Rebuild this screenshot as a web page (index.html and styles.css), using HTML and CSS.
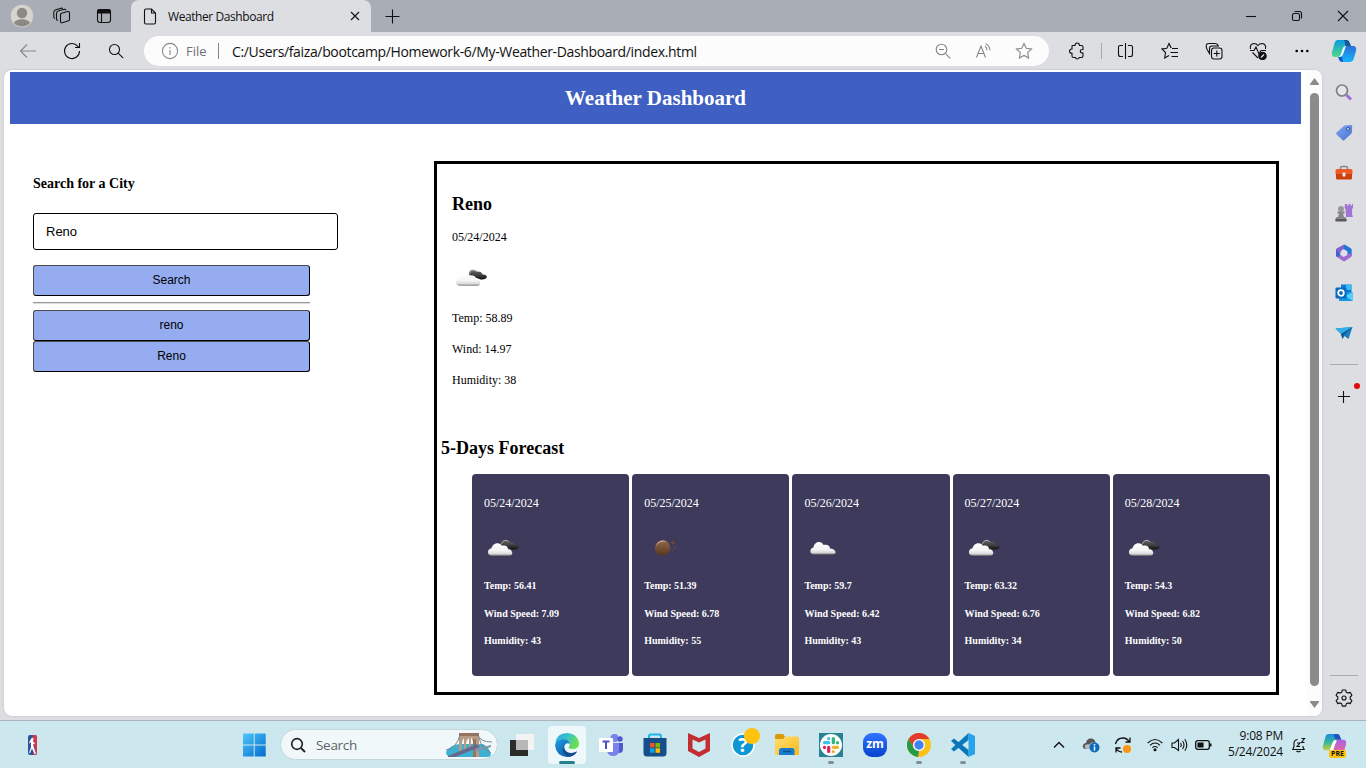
FILE: index.html
```html
<!DOCTYPE html>
<html lang="en">
<head>
<meta charset="utf-8">
<title>Weather Dashboard</title>
<link rel="stylesheet" href="styles.css">
</head>
<body>
<svg class="defs" width="0" height="0">
  <defs>
    <linearGradient id="cloud" x1="0" y1="0" x2="0" y2="1"><stop offset="0" stop-color="#fff"/><stop offset=".6" stop-color="#f4f4f4"/><stop offset=".85" stop-color="#d8d8d8"/><stop offset="1" stop-color="#777"/></linearGradient>
    <linearGradient id="dark" x1="0" y1="0" x2="0" y2="1"><stop offset="0" stop-color="#666"/><stop offset=".5" stop-color="#444"/><stop offset="1" stop-color="#111"/></linearGradient>
    <linearGradient id="moon" x1="0" y1="0" x2="0" y2="1"><stop offset="0" stop-color="#94694a"/><stop offset="1" stop-color="#55361f"/></linearGradient>
    <linearGradient id="win" x1="0" y1="0" x2="1" y2="1"><stop offset="0" stop-color="#4cc8fb"/><stop offset="1" stop-color="#0669cf"/></linearGradient>
    <linearGradient id="copA" x1="0" y1="0" x2="0" y2="1"><stop offset="0" stop-color="#0a9be0"/><stop offset="1" stop-color="#52d985"/></linearGradient>
    <linearGradient id="copB" x1="0" y1="0" x2="0" y2="1"><stop offset="0" stop-color="#2b6fd8"/><stop offset="1" stop-color="#12b7fb"/></linearGradient>
    <linearGradient id="edgeG" x1="0" y1="0" x2="1" y2=".4"><stop offset="0" stop-color="#2aa9dd"/><stop offset=".5" stop-color="#35c1cf"/><stop offset="1" stop-color="#6be04f"/></linearGradient>
    <linearGradient id="edgeB" x1="0" y1="0" x2="1" y2="1"><stop offset="0" stop-color="#1d9ee3"/><stop offset="1" stop-color="#0d4a9c"/></linearGradient>
    <linearGradient id="tag" x1="0" y1="0" x2="1" y2="1"><stop offset="0" stop-color="#7aa6f0"/><stop offset="1" stop-color="#4d73cf"/></linearGradient>
    <linearGradient id="folder" x1="0" y1="0" x2="1" y2="1"><stop offset="0" stop-color="#ffdf73"/><stop offset="1" stop-color="#fbb919"/></linearGradient>
    <linearGradient id="preA" x1="0" y1="0" x2="0" y2="1"><stop offset="0" stop-color="#188bdf"/><stop offset=".5" stop-color="#35b59a"/><stop offset="1" stop-color="#c6cf3e"/></linearGradient>
    <linearGradient id="preB" x1="0" y1="0" x2="0" y2="1"><stop offset="0" stop-color="#a863e6"/><stop offset="1" stop-color="#f56a84"/></linearGradient>
    <linearGradient id="zoomer" x1="0" y1="0" x2="0" y2="1"><stop offset="0" stop-color="#2f74ff"/><stop offset="1" stop-color="#0842cf"/></linearGradient>
    <symbol id="broken-clouds" viewBox="0 0 38 38">
      <path d="M17 15c-1-5 5-7 8-3.500 3-.3 5 1 5.500 3 3.500 0 5 1.500 4 3.500-1 1.500-4 1.500-6 1.500z" fill="url(#dark)"/>
      <path d="M17.500 14c1-4 5.500-4.500 7.500-2" stroke="#aaa" fill="none"/>
      <path d="M8 25.800c-5 0-5.500-6.500-.5-7.500 1-5.500 8.500-7 10.500-2.500 4-1 6 1 6 3.500 5 0 6 6.500 1 6.500z" fill="url(#cloud)"/>
    </symbol>
    <symbol id="cloudy" viewBox="0 0 38 38"><path d="M10 24.500c-4.500 0-5-6-.5-7 .5-6 8-7.500 10-2.500 4-1 6.500 1 6.500 3.500 6 0 7.500 6 3 6z" fill="url(#cloud)"/></symbol>
    <symbol id="mist-night" viewBox="0 0 38 38"><circle cx="18.700" cy="18" r="7.700" fill="url(#moon)"/><path d="M11.800 16.500a7.300 7.300 0 0 1 11-4.800c-5-.5-9 .5-11 4.800z" fill="#d9bda8"/><path d="M27 12.500h3.600M28.800 10.700v3.600M29.500 17.500h2M27.500 20.500h1.500" stroke="#75492f" stroke-width="1.600"/></symbol>
  </defs>
</svg>

<header class="tabstrip">
  <div class="cell avatar-cell"><svg width="24" height="24" viewBox="0 0 24 24"><circle cx="12" cy="12" r="11.200" fill="#d6d4cf"/><circle cx="12" cy="9" r="5.200" fill="#8c8883"/><path d="M4 19c2-5 14-5 16 0a11 11 0 0 1-16 0z" fill="#8c8883"/></svg></div>
  <div class="cell spaces-cell"><svg class="ln" width="18" height="18" viewBox="0 0 18 18"><path d="M8.500 6.200l6-1.700q2-.3 2 1.500v6.500q0 1-1 1.300l-6 1.900q-2 .4-2-1.300V7.500q0-1 1-1.300zM5 13.500q-1.500-.2-1.500-1.500V6.500q0-2 2-2.700l6-1.500q1.200 0 1.500.8M2 11.500q-1.200-.3-1.200-1.500V5.500q0-2 2-2.700L8 1.200q1.300-.2 1.600.5"/></svg></div>
  <div class="cell layout-cell"><svg class="ln" width="16" height="16" viewBox="0 0 16 16"><rect x="1.500" y="1.500" width="13" height="13" rx="2.500"/><path d="M2 2h12v3H2z" fill="#111"/><path d="M5.500 5v9"/></svg></div>
  <div class="tab">
    <svg class="ln" width="14" height="17" viewBox="0 0 14 17"><path d="M3 1h5.500L12.500 5v9.500q0 1.500-1.500 1.500H3q-1.500 0-1.500-1.500v-12Q1.500 1 3 1zM8.500 1v4h4"/></svg>
    <span class="tab-title">Weather Dashboard</span>
    <svg class="ln tab-close" width="10" height="10" viewBox="0 0 10 10"><path d="M1 1l8 8M9 1L1 9"/></svg>
  </div>
  <div class="cell new-tab"><svg class="ln" width="15" height="15" viewBox="0 0 15 15"><path d="M7.500 .5v14M.5 7.500h14"/></svg></div>
  <div class="window-buttons">
    <svg class="ln" width="46" height="32" viewBox="0 0 46 32"><path d="M18 16.500h10"/></svg>
    <svg class="ln" width="46" height="32" viewBox="0 0 46 32"><rect x="18.500" y="13.500" width="7" height="7" rx="1.500"/><path d="M20.500 11.500h5q2 0 2 2v5"/></svg>
    <svg class="ln" width="46" height="32" viewBox="0 0 46 32"><path d="M18 11l10 10M28 11L18 21"/></svg>
  </div>
</header>

<nav class="toolbar">
  <div class="cell"><svg class="ln grey" width="18" height="16" viewBox="0 0 18 16"><path d="M17 8H1.500M8 1.500L1.500 8 8 14.500"/></svg></div>
  <div class="cell"><svg class="ln" width="18" height="18" viewBox="0 0 18 18"><path d="M16.500 9A7.500 7.500 0 1 1 14.800 4.300L16 5.500M16.500 1v4.500H12"/></svg></div>
  <div class="cell"><svg class="ln" width="16" height="16" viewBox="0 0 16 16"><circle cx="6.500" cy="6.500" r="5"/><path d="M10.200 10.200l5 5"/></svg></div>
  <div class="address">
    <svg class="ln grey" width="18" height="18" viewBox="0 0 18 18"><circle cx="9" cy="9" r="7.600"/><path d="M9 8v5M9 5v1.500"/></svg>
    <span class="scheme">File</span>
    <span class="address-sep"></span>
    <span class="url">C:/Users/faiza/bootcamp/Homework-6/My-Weather-Dashboard/index.html</span>
    <div class="address-actions">
      <svg class="ln grey" width="16" height="16" viewBox="0 0 16 16"><circle cx="6.500" cy="6.500" r="5.300"/><path d="M4 6.500h5M10.300 10.300l5 5"/></svg>
      <svg class="ln grey" width="18" height="16" viewBox="0 0 18 16"><path d="M2.500 14.500L7 3l4.500 11.500M4 10.500h6M11 3.200q2 1.500 2 4M11.500 .8q4 1.800 4.500 6.400"/></svg>
      <svg class="ln grey" width="18" height="18" viewBox="0 0 18 18"><path d="M9 1.500l2.300 4.800 5.200.7-3.800 3.700.9 5.300L9 13.500 4.400 16l.9-5.300L1.500 7l5.200-.7z"/></svg>
    </div>
  </div>
  <div class="cell"><svg class="ln" width="18" height="18" viewBox="0 0 18 18"><path d="M4.500 3.500H7Q7 1 9.200 1t2.200 2.500h2.100q1.500 0 1.500 1.500v2.500q-2.700 0-2.700 1.700T15 11v2.500q0 2-1.500 2h-2.300Q11 17 9.300 17T7.500 15.500h-2Q4 15.500 4 14v-2.800Q1.500 11.200 1.500 9.200T4 7V4z"/></svg></div>
  <span class="tool-sep"></span>
  <div class="cell"><svg class="ln" width="18" height="18" viewBox="0 0 18 18"><path d="M6 3.500H3Q1.500 3.500 1.500 5v7.500q0 2 2 2H6M11 3.500h3q1.500 0 1.500 1.500v7.500q0 2-2 2H11M8.500 1v16"/></svg></div>
  <div class="cell"><svg class="ln" width="18" height="18" viewBox="0 0 18 18"><path d="M10 5.800L8 1.500 5.800 6.300 1 7l3.500 3.500L3.700 16 8 13.500M8 1.500L10.300 6M11 6.500h6M9.500 10.500H17M10.500 14.500H17"/></svg></div>
  <div class="cell"><svg class="ln" width="18" height="18" viewBox="0 0 18 18"><rect x="6.500" y="6" width="10.500" height="11" rx="2.500"/><path d="M11.800 8.500v6M8.800 11.500h6M5 12.500L2 7.200Q1 5 1.200 3.500q.3-2 2.300-2h7q2 0 2.800 2.500M4.500 11V6.500q0-2.500 2.500-2.500h7"/></svg></div>
  <div class="cell"><svg class="ln" width="18" height="18" viewBox="0 0 18 18"><path d="M9 16L3.500 10.500M1.500 7Q.5 2 5 1.500q2.500 0 4 2 1.500-2 4-2 4.500.5 3.500 5.500M1 8.500h4l2-3.500 3 7 2-3.500h5"/><circle cx="13.500" cy="14" r="3.700" fill="#111"/><path d="M12 15.500l3-3" stroke="#eee"/></svg></div>
  <div class="cell"><svg width="16" height="16" viewBox="0 0 16 16"><circle cx="2.700" cy="8" r="1.300"/><circle cx="8" cy="8" r="1.300"/><circle cx="13.300" cy="8" r="1.300"/></svg></div>
  <div class="cell copilot"><svg width="26" height="24" viewBox="0 0 26 24"><path d="M6.500 1h9q2.500 0 3 2.500L20 7h-5l-4 9q-1 2-3.500 2H4q-4 0-3-5L3.500 4Q4.300 1 6.500 1z" fill="url(#copA)"/><path d="M13 1h2.500Q18 1 18.600 3.500L20 7h-5q-1.500-.5-1-3z" fill="#165a9c"/><path d="M19.500 23h-8q-2.500 0-3.200-2.500L7.500 18q2.500-.5 3.500-3l3-8h8q4 0 3 5l-2.300 8q-1 3-3.200 3z" fill="url(#copB)"/><path d="M8 18q3.500 0 4.500-4L15 7q-2.500 0-3.500 3l-1.500 5q-.7 2.500-3 3z" fill="#e9fbff"/><path d="M7 18h4l1 5q-3.500 0-4-3z" fill="#1653ce"/></svg></div>
</nav>

<div class="workspace">
  <div class="viewport">
    <div class="page">
      <h1 class="page-title">Weather Dashboard</h1>
      <div class="columns">
        <section class="search-panel">
          <h3 class="search-heading">Search for a City</h3>
          <input class="city-input" type="text" value="Reno">
          <button class="btn">Search</button>
          <hr class="rule">
          <button class="btn">reno</button>
          <button class="btn">Reno</button>
        </section>
        <main class="results">
          <section class="today">
            <h2 class="heading">Reno</h2>
            <p class="today-date">05/24/2024</p>
            <svg class="today-icon" width="38" height="38"><use href="#broken-clouds"/></svg>
            <p class="stat">Temp: 58.89</p>
            <p class="stat">Wind: 14.97</p>
            <p class="stat">Humidity: 38</p>
          </section>
          <h2 class="heading forecast-heading">5-Days Forecast</h2>
          <section class="forecast">
            <article class="card"><p class="card-date">05/24/2024</p><svg class="card-icon" width="38" height="38"><use href="#broken-clouds"/></svg><h5 class="temp">Temp: 56.41</h5><h5 class="wind">Wind Speed: 7.09</h5><h5 class="hum">Humidity: 43</h5></article>
            <article class="card"><p class="card-date">05/25/2024</p><svg class="card-icon" width="38" height="38"><use href="#mist-night"/></svg><h5 class="temp">Temp: 51.39</h5><h5 class="wind">Wind Speed: 6.78</h5><h5 class="hum">Humidity: 55</h5></article>
            <article class="card"><p class="card-date">05/26/2024</p><svg class="card-icon" width="38" height="38"><use href="#cloudy"/></svg><h5 class="temp">Temp: 59.7</h5><h5 class="wind">Wind Speed: 6.42</h5><h5 class="hum">Humidity: 43</h5></article>
            <article class="card"><p class="card-date">05/27/2024</p><svg class="card-icon" width="38" height="38"><use href="#broken-clouds"/></svg><h5 class="temp">Temp: 63.32</h5><h5 class="wind">Wind Speed: 6.76</h5><h5 class="hum">Humidity: 34</h5></article>
            <article class="card"><p class="card-date">05/28/2024</p><svg class="card-icon" width="38" height="38"><use href="#broken-clouds"/></svg><h5 class="temp">Temp: 54.3</h5><h5 class="wind">Wind Speed: 6.82</h5><h5 class="hum">Humidity: 50</h5></article>
          </section>
        </main>
      </div>
    </div>
    <div class="scrollbar">
      <svg width="9" height="7" viewBox="0 0 9 7"><path d="M4.500 0L9 6v1H0V6z" fill="#8b8b8b"/></svg>
      <div class="thumb"></div>
      <svg width="9" height="7" viewBox="0 0 9 7"><path d="M4.500 7L9 1V0H0v1z" fill="#8b8b8b"/></svg>
    </div>
  </div>
  <aside class="sidebar">
    <div class="side-cell"><svg width="18" height="18" viewBox="0 0 18 18"><circle cx="7" cy="6.500" r="5.500" fill="#e3e5e8" stroke="#808080" stroke-width="1.700"/><path d="M11.500 11l4.500 4.500" stroke="#a06cd5" stroke-width="3"/></svg></div>
    <div class="side-cell"><svg width="18" height="18" viewBox="0 0 18 18"><path d="M9.500 1.500L16 1q1.200 0 1.200 1.200L17 8q0 1-1 2l-6.500 6q-1 1-2 0L1.500 10.500q-1-1 0-2z" fill="url(#tag)"/><circle cx="13" cy="5" r="1.500" fill="#dce9ff" stroke="#2e5096"/></svg></div>
    <div class="side-cell"><svg width="18" height="18" viewBox="0 0 18 18"><path d="M5.500 6V4q0-1.500 1.500-1.500h4q1.500 0 1.500 1.500v2" fill="none" stroke="#888" stroke-width="1.500"/><rect x=".5" y="5" width="17" height="5.500" rx="1.500" fill="#eb5a26"/><path d="M1 10h16v4q0 1.500-1.500 1.500h-13Q1 15.500 1 14z" fill="#cb3f0c"/><rect x="7.500" y="8.500" width="3" height="4" rx=".5" fill="#e6e6e6"/></svg></div>
    <div class="side-cell"><svg width="18" height="18" viewBox="0 0 18 18"><path d="M10 0h2v1.500h1.500V0h2v1.500H17V0h1v4l-1 1 .2 6 .8 2h-7l-.5-8-1-1z" fill="#a274d6"/><circle cx="6" cy="5" r="3" fill="#999"/><path d="M2.500 7.500h7v2H8l1 3.500h1.500q1 1 1 4h-11q0-3 1-4H3l1-3.500H2.500z" fill="#878787"/><path d="M.5 15h11v2.500H.5z" fill="#595959"/></svg></div>
    <div class="side-cell"><svg width="18" height="18" viewBox="0 0 18 18"><path d="M9 .5L1.500 4.500Q1 5 1 6v6l3 2 2-7 4-3V1z" fill="#7f62d4"/><path d="M9.500 .5l6 3.500q1.200.8 1.200 2v6L12.500 12V7.500L8.500 5z" fill="#2475d8"/><path d="M1.500 12.500l6.500 4.500q1 .5 2 0l6-4q.8-.6.8-2V8.500L12.500 11l-4 2L5 10.500 3 13z" fill="#a06ad4"/><path d="M1 6l4 3.500v2L2.500 13Q1 13 1 11z" fill="#3f63cc"/><circle cx="9" cy="9" r="2.900" fill="#dedfe3"/></svg></div>
    <div class="side-cell"><svg width="18" height="18" viewBox="0 0 18 18"><path d="M6 .5h10.500v9H6z" fill="#0f78d4"/><path d="M11 1h5.500v5H11z" fill="#35bdf1"/><path d="M4 8h13.500v9H4z" fill="#1596df"/><path d="M17.500 8v9L10 12z" fill="#50d0fa"/><rect x=".5" y="3.500" width="11" height="11" rx="1.200" fill="#0869bd"/><circle cx="6" cy="9" r="2.800" fill="none" stroke="#fff" stroke-width="1.800"/></svg></div>
    <div class="side-cell"><svg width="18" height="18" viewBox="0 0 18 18"><path d="M.5 4.500L17.500 3l-4 12-4-3-2 3-1.500-5z" fill="#157ec8"/><path d="M.5 4.500L17.500 3 6 10z" fill="#32b0e7"/><path d="M17.500 3L6 10l1.500 5 1.500-4z" fill="#185783"/></svg></div>
    <span class="side-rule"></span>
    <div class="side-cell add-cell"><svg class="ln" width="12" height="12" viewBox="0 0 12 12"><path d="M5.500 0v12M0 5.500h12"/></svg><i class="alert-dot"></i></div>
    <span class="side-rule settings-rule"></span>
    <div class="side-cell"><svg class="ln" width="18" height="18" viewBox="0 0 18 18"><path d="M7.300 1h3.400l.6 2.300 1.600.8 2.300-.7 1.700 2.900-1.700 1.700v2l1.700 1.700-1.700 2.900-2.300-.7-1.600.9-.6 2.300H7.300l-.6-2.300-1.600-.9-2.300.7-1.700-2.900L2.800 10V8L1.100 6.300l1.700-2.900 2.300.7 1.600-.8z" stroke-linejoin="round"/><circle cx="9" cy="9" r="2"/></svg></div>
  </aside>
</div>

<footer class="taskbar">
  <div class="widget"><svg width="9" height="20" viewBox="0 0 9 20"><rect width="9" height="20" rx="2" fill="#2c55a0"/><path d="M5 0h2q2 0 2 2v16q0 2-2 2H5l2-7-3-5z" fill="#d23a4c"/><path d="M4 2.500l1.500 1-.5 3 2 2-2 1 1.500 5L8 19H6.500L4 13.500 2 18H1l2-6V7L1.500 9V6.500z" fill="#fff"/></svg></div>
  <div class="app"><svg width="24" height="24" viewBox="0 0 24 24"><path d="M1 .5h10.700v11H1zM12.700.5h11v11h-11zM1 12.500h10.700v11H1zM12.700 12.500h11v11h-11z" fill="url(#win)"/></svg></div>
  <div class="searchbox">
    <svg width="16" height="16" viewBox="0 0 16 16"><circle cx="7" cy="7" r="5.300" fill="none" stroke="#222" stroke-width="1.700"/><path d="M11 11l4 4" stroke="#222" stroke-width="2"/></svg>
    <span class="search-text">Search</span>
    <svg class="bridge" width="48" height="26" viewBox="0 0 48 26"><path d="M1 20Q6 12 16 12h22q7 4 8 11-1 2-3 2H5q-4-1-4-5z" fill="#3db1d4"/><path d="M14 2h20v23h-6V12q0-5-2-6.500V17h-2V6q-3 2-3 6v6h-2V6q-2 2-2 6v9h-3z" fill="#b99b84"/><path d="M14 1h20v3H14zM28 7v18h3V7z" fill="#927460"/><path d="M3 24L32 12l3 3L10 25H3z" fill="#656a91"/><path d="M30 17l16-4v2l-16 5z" fill="#8494a5"/><path d="M1 18Q11 17 15 3M33 3q2 7 14 7M34 6q3 11 12 15" fill="none" stroke="#7a8794"/></svg>
  </div>
  <div class="app task-view"><svg width="24" height="22" viewBox="0 0 24 22"><path d="M0 6h18v16H0z" fill="#2b2b29"/><path d="M6 0h18v16H6z" fill="#f3f3f3"/><path d="M6 6h12v10H6z" fill="#b7b8b8"/></svg></div>
  <div class="app active"><svg width="24" height="24" viewBox="0 0 24 24"><path d="M.3 10Q2 0 12 0t12 10q0 6-6.500 6-4 0-4-1.700 1.500-1 1.200-3Q14 6.500 8 6 2.500 6 .3 10z" fill="url(#edgeG)"/><path d="M0 12Q1 6 7.500 6q6.500 0 7.200 5-2-1.500-4 0-3 3 0 7 4 4 11.500.5Q18.500 24 12 24 1 23 0 12z" fill="url(#edgeB)"/><path d="M9.500 12q-3.500 5 0 9 2 2 5 2.800 5-1 7.500-5.300-7 3-11 0-3-3-1.500-6.500z" fill="#114c91"/></svg><i class="active-bar"></i></div>
  <div class="app"><svg width="24" height="24" viewBox="0 0 24 24"><circle cx="15.500" cy="5" r="4" fill="#7b83eb"/><circle cx="21" cy="6" r="2.700" fill="#5059c9"/><path d="M18 10h6v6q0 4-4 4-2 0-3-2z" fill="#5059c9"/><path d="M8 10h12v7q0 6-6 6-5 0-6-5z" fill="#7b83eb"/><rect y="5" width="14" height="14" rx="1" fill="#fff"/><path d="M3.500 8.500h7M7 8.500V16" stroke="#4b53bc" stroke-width="2"/></svg></div>
  <div class="app"><svg width="24" height="24" viewBox="0 0 24 24"><path d="M6 6V3q0-1.500 1.500-1.500h9Q18 1.500 18 3v3" fill="none" stroke="#1db5ef" stroke-width="2"/><path d="M.5 5h23v15q0 3.500-3.500 3.500H4Q.5 23.500 .5 20z" fill="#174d89"/><path d="M7 10h4.500v4.500H7z" fill="#f25022"/><path d="M12.500 10H17v4.500h-4.500z" fill="#7fba00"/><path d="M7 15.300h4.500v4.500H7z" fill="#00a4ef"/><path d="M12.500 15.300H17v4.500h-4.500z" fill="#ffb900"/></svg></div>
  <div class="app"><svg width="22" height="24" viewBox="0 0 22 24"><path d="M0 0l11 5L22 0v18l-11 6-11-6z" fill="#c22e31"/><path d="M4.500 6.500L11 9.500l6.500-3v9L11 19l-6.500-3.500z" fill="#cfe8ef"/></svg></div>
  <div class="app"><svg width="24" height="24" viewBox="0 0 24 24"><circle cx="12" cy="12" r="11" fill="#0b96d4" stroke="#fff" stroke-width="1.500"/></svg><b class="help-mark">?</b><i class="help-badge"></i></div>
  <div class="app"><svg width="24" height="22" viewBox="0 0 24 22"><path d="M0 2q0-2 2-2h6l2.500 3H9v4H0z" fill="#d89a04"/><path d="M0 5h8l3-2.500h11q2 0 2 2V21H1.500Q0 21 0 19.500z" fill="url(#folder)"/><path d="M4 21v-4.500Q4 14 6.500 14h10.500q2.500 0 2.500 2.500V21z" fill="#187bd0"/><path d="M8 17.500h8" stroke="#075493" stroke-width="1.500"/></svg></div>
  <div class="app"><svg width="24" height="24" viewBox="0 0 24 24"><rect width="24" height="24" fill="#288291"/><circle cx="12" cy="12" r="11" fill="#fff"/><g fill="none" stroke-width="3.200" stroke-linecap="round"><path d="M9.700 5.500v.1M5.500 9.700h4.300" stroke="#36c5f0"/><path d="M14.300 5.500v4.200M18.500 9.700v.1" stroke="#2eb67d"/><path d="M14.300 14.300h4.200M14.300 18.500v.1" stroke="#ecb22e"/><path d="M9.700 14.300v4.200M5.500 14.300v.1" stroke="#e01e5a"/></g></svg><i class="run-bar"></i></div>
  <div class="app"><svg width="24" height="24" viewBox="0 0 24 24"><rect width="24" height="24" rx="9" fill="url(#zoomer)"/></svg><b class="zoom-word">zm</b></div>
  <div class="app"><svg width="24" height="24" viewBox="0 0 24 24"><circle cx="12" cy="12" r="12" fill="#fbc116"/><path d="M1.600 6A12 12 0 0 1 22.400 6H12L6.800 15z" fill="#e33b2e"/><path d="M1.600 6l5.200 9L12 18l-1 6A12 12 0 0 1 1.600 6z" fill="#269b47"/><circle cx="12" cy="12" r="5.400" fill="#4083f1" stroke="#fff" stroke-width="1.400"/></svg><i class="run-bar"></i></div>
  <div class="app"><svg width="24" height="24" viewBox="0 0 24 24"><path d="M17.500 0L24 3v18l-6.500 3z" fill="#27a3ed"/><path d="M17.500 0v7L3 18.500 0 16z" fill="#087bc0"/><path d="M17.500 24v-7L3 5.500 0 8z" fill="#0877b9"/></svg><i class="run-bar"></i></div>
  <div class="tray">
    <svg class="ln" width="12" height="8" viewBox="0 0 12 8"><path d="M1 6.500l5-5 5 5" stroke-width="1.400"/></svg>
    <svg class="onedrive" width="18" height="16" viewBox="0 0 18 16"><path d="M4 12Q0 12 1 8q1-2 3-2 1-5 5-4.500 4 0 4.500 4.500L6 12z" fill="#555"/><path d="M5 12Q1.500 11 3 8.500q2-2 4.500-1Q10 4 13 6l1 6z" fill="#b6babd"/><circle cx="12.500" cy="10.500" r="5" fill="#0b6cbd"/><path d="M12.500 9.500v4M12.500 7v1.500" stroke="#fff" stroke-width="1.500"/></svg>
    <svg class="ln" width="18" height="18" viewBox="0 0 18 18"><path d="M1.500 8Q3 2 9 2q4 0 6.500 4M16 1.500V6h-4.500M2 16.500V12h4.500M2 12q2 4 6 4" stroke-width="1.300"/><circle cx="13" cy="13" r="4" fill="#fb9611" stroke="none"/></svg>
    <svg class="ln wifi" width="16" height="14" viewBox="0 0 16 14"><path d="M.7 5Q8-2 15.300 5M3 7.300q5-4.500 10 0M5.300 9.600q2.700-2.300 5.400 0"/><circle cx="8" cy="11.700" r="1" fill="#111"/></svg>
    <svg class="ln volume" width="17" height="14" viewBox="0 0 17 14"><path d="M1 5h2.500L7.500 1.500v11L3.500 9.500H1zM9.500 5q1.500 2 0 4M11.500 3q3 4 0 8M13.800 1.200q4 5.800 0 11.600"/></svg>
    <svg class="ln battery" width="17" height="10" viewBox="0 0 17 10"><rect x=".7" y=".7" width="13.600" height="8.600" rx="2" stroke-width="1.300"/><path d="M3 3h5v4H3z" fill="#111"/><path d="M15.700 3.500v3" stroke-width="1.600"/></svg>
    <div class="clock"><span class="time">9:08 PM</span><span class="date">5/24/2024</span></div>
    <svg class="ln bell" width="14" height="16" viewBox="0 0 14 16"><path d="M5.500 2.500Q2 3 2 6.500v3L.8 12.500h11.400L11 10V9M4.500 14q2 1.500 4 0M5 6h3L5 9.500h3M9.500 1.500h3l-3 4h3"/></svg>
    <div class="copilot-pre"><svg width="25" height="23" viewBox="0 0 26 24"><path d="M6.500 1h9q2.500 0 3 2.500L20 7h-5l-4 11H4q-4 0-3-5L3.500 4Q4.300 1 6.500 1z" fill="url(#preA)"/><path d="M12 1h3.500Q18 1 18.600 3.500L20 7h-6z" fill="#2450bc"/><path d="M14 7h8q4 0 3 5l-2.300 8q-1 3-3.200 3h-8z" fill="url(#preB)"/><path d="M15 7q-3 0-4 3l-3 8h3l4-9z" fill="#fff"/></svg><b class="pre">PRE</b></div>
  </div>
</footer>
</body>
</html>
```
FILE: styles.css
```css
* { box-sizing: border-box; }
body {
  margin: 0;
  width: 1366px;
  height: 768px;
  overflow: hidden;
  display: flex;
  flex-direction: column;
  background: #dddee2;
  font-family: "Open Sans", "Noto Sans", sans-serif;
  color: #111;
}
svg { display: block; flex: none; }
h1, h2, h3, h5, p { margin: 0; }
.defs { height: 0; }
.ln { fill: none; stroke: #111; stroke-width: 1.1; }
.grey { stroke: #85878b; }
.cell { width: 44px; display: flex; align-items: center; justify-content: center; flex: none; }

/* tab strip */
.tabstrip { height: 32px; background: #a9aeb6; display: flex; flex: none; }
.spaces-cell { width: 36px; }
.layout-cell { width: 48px; margin-right: 3px; }
.tab { width: 240px; background: #dddee2; border-radius: 8px 8px 0 0; display: flex; align-items: center; padding: 0 11px 0 12px; }
.tab-title { font-size: 12px; margin-left: 11px; letter-spacing: -0.42px; white-space: nowrap; }
.tab-close { margin-left: auto; }
.new-tab { width: 43px; }
.window-buttons { margin-left: auto; display: flex; }

/* toolbar */
.toolbar { height: 38px; display: flex; align-items: center; padding-left: 6px; flex: none; }
.address { width: 905px; height: 30px; margin: 0 6px; border-radius: 15px; background: #fcfcfd; display: flex; align-items: center; padding: 0 16px 0 17px; white-space: nowrap; }
.scheme { width: 32px; margin-left: 7px; font-size: 13px; color: #707174; }
.address-sep { width: 1px; height: 16px; background: #85878b; margin: 0 13px 0 0; }
.url { font-size: 14px; letter-spacing: -0.35px; }
.address-actions { margin-left: auto; display: flex; align-items: center; gap: 23px; }
.tool-sep { width: 1px; height: 16px; margin: 0 2px; background: #a6a8ac; }
.copilot { width: 40px; }

/* browser content */
.workspace { height: 650px; display: flex; flex: none; }
.viewport { width: 1318px; height: 646px; margin-left: 4px; background: #fff; border-radius: 8px; display: flex; box-shadow: 0 0 2px #b4b6ba; overflow: hidden; flex: none; }
.page { width: 1303px; padding: 2px 6px 0; font-family: "Liberation Serif", serif; color: #000; }
.page-title { height: 52px; line-height: 52px; background: #3f5fc3; color: #fff; font-size: 21px; text-align: center; }
.columns { display: flex; justify-content: space-between; padding: 37px 22px 0 23px; }
.search-panel { width: 305px; padding-top: 15px; display: flex; flex-direction: column; }
.search-heading { font-size: 14px; line-height: 16px; }
.city-input { height: 37px; margin: 21px 0 15px; border: 1px solid #000; border-radius: 3px; padding: 0 12px; font: 13px "Liberation Sans", sans-serif; background: #fff; color: #000; }
.btn { width: 277px; height: 31px; border: 1px solid; border-color: #4c4c4c #000 #000 #4c4c4c; border-radius: 3px; background: #96acf1; font: 12px "Liberation Sans", sans-serif; color: #000; padding: 0 0 1px; }
.rule { width: 277px; height: 2px; border: 0; border-top: 1px solid #999; border-bottom: 1px solid #ddd; margin: 6px 0; }
.results { width: 845px; height: 534px; border: 3px solid #000; padding: 30px 6px 0 4px; font-size: 12px; line-height: 14px; }
.heading { font-size: 18px; line-height: 20px; }
.today { padding-left: 11px; }
.today-date { margin-top: 16px; }
.today-icon { margin: 16px 0 13px; }
.stat + .stat { margin-top: 17px; }
.forecast-heading { margin-top: 51px; }
.forecast { display: grid; grid-template-columns: repeat(5, 1fr); gap: 3px; margin: 16px 0 0 31px; }
.card { height: 202px; padding: 22px 12px 0; border-radius: 4px; background: #3d3a5c; color: #fff; }
.card-icon { margin: 20px 0 12px; }
.card h5 { font-size: 10px; line-height: 12px; }
.wind { margin-top: 16px; }
.card .hum { margin-top: 15px; }
.scrollbar { width: 15px; padding: 8px 3px; display: flex; flex-direction: column; align-items: center; background: #fcfcfc; }
.thumb { width: 9px; height: 593px; margin: 8px 0 15px; border-radius: 5px; background: #8b8b8b; }

/* sidebar */
.sidebar { width: 44px; padding-top: 3px; display: flex; flex-direction: column; align-items: center; }
.side-cell { position: relative; width: 40px; height: 40px; display: flex; align-items: center; justify-content: center; }
.side-rule { width: 28px; height: 1px; margin: 11px 0 12px; background: #a9abae; }
.alert-dot { position: absolute; right: 4px; top: 6px; width: 6px; height: 6px; border-radius: 50%; background: #e00b0b; }
.settings-rule { margin: 258px 0 2px; }

/* taskbar */
.taskbar { height: 48px; background: #cde7ee; border-top: 1px solid #a9b4bd; display: flex; align-items: center; flex: none; }
.widget { width: 232px; padding-left: 28px; }
.app { position: relative; width: 44px; height: 48px; display: flex; align-items: center; justify-content: center; flex: none; }
.searchbox { width: 218px; height: 31px; margin: 0 3px 0 4px; border-radius: 16px; background: #f0f8fa; border: 1px solid #c4d7dd; display: flex; align-items: center; padding: 0 4px 0 9px; overflow: hidden; }
.search-text { margin-left: 10px; font-size: 13.5px; color: #5e6264; letter-spacing: -0.3px; }
.bridge { margin-left: auto; }
.task-view { padding-right: 2px; }
.active::before { content: ""; position: absolute; inset: 5px 3px; border-radius: 4px; background: #eef7f9; }
.active svg { position: relative; }
.active-bar, .run-bar { position: absolute; bottom: 5px; width: 16px; height: 3px; border-radius: 2px; background: #27808f; }
.run-bar { width: 6px; background: #838e92; }
.help-mark { position: absolute; font: bold 20px/24px "Open Sans", sans-serif; color: #fff; }
.help-badge { position: absolute; right: 5px; top: 7px; width: 16px; height: 16px; border-radius: 50%; background: #ffc20e; }
.zoom-word { position: absolute; color: #fff; font: bold 12px/20px "Open Sans", sans-serif; padding-bottom: 2px; }
.tray { margin-left: auto; display: flex; align-items: center; padding-right: 19px; }
.tray > svg + svg { margin-left: 14px; }
.tray > .onedrive { margin-left: 17px; }
.tray > .wifi { margin-left: 15px; }
.tray > .volume { margin-left: 8px; }
.tray > .battery { margin-left: 7px; }
.clock { width: 71px; padding-bottom: 1px; display: flex; flex-direction: column; align-items: flex-end; font-size: 12px; line-height: 16px; letter-spacing: -0.2px; white-space: nowrap; }
.tray > .bell { margin-left: 9px; }
.copilot-pre { position: relative; margin-left: 16px; }
.pre { position: absolute; right: 1px; bottom: -2px; background: #ffc20e; border-radius: 2px; padding: 0 2px; font: bold 7px/8px "Open Sans", sans-serif; }
```
